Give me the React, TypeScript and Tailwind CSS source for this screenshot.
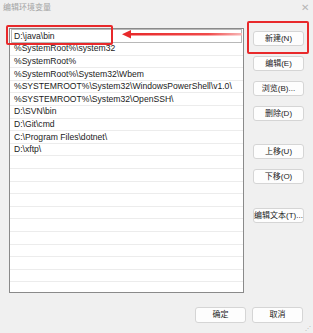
import React from 'react';

const paths = [
  'D:\\java\\bin',
  '%SystemRoot%\\system32',
  '%SystemRoot%',
  '%SystemRoot%\\System32\\Wbem',
  '%SYSTEMROOT%\\System32\\WindowsPowerShell\\v1.0\\',
  '%SYSTEMROOT%\\System32\\OpenSSH\\',
  'D:\\SVN\\bin',
  'D:\\Git\\cmd',
  'C:\\Program Files\\dotnet\\',
  'D:\\xftp\\',
];

const Btn: React.FC<{ label: string; className?: string }> = ({ label, className = '' }) => (
  <button
    className={`w-[51px] h-[15px] bg-[#fdfdfd] border border-[#d5d5d5] rounded-[3px] text-[8px] leading-none text-[#1b1b1b] flex items-center justify-center ${className}`}
  >
    {label}
  </button>
);

export default function App() {
  const empty = Array.from({ length: 10 });
  return (
    <div
      className="relative w-[313px] h-[333px] bg-[#f0f0f0] overflow-hidden"
      style={{ fontFamily: '"Liberation Sans", "Noto Sans CJK SC", sans-serif' }}
    >
      {/* Title bar */}
      <div className="h-[15px] flex items-center justify-between pl-[3px] pr-[4px]">
        <span className="text-[8px] text-[#a3a3a3]">编辑环境变量</span>
        <span className="text-[10px] text-[#b5b5b5] leading-none">✕</span>
      </div>

      <div className="flex mt-[13px] pl-[9px]">
        {/* List */}
        <div className="w-[235px] h-[265px] bg-white border border-[#8a8a8a] overflow-hidden">
          <div className="h-[14px] mx-[1px] border border-[#b8b8b8] bg-white flex items-center pl-[2px] text-[8.6px] text-[#1b1b1b]">
            {paths[0]}
          </div>
          {paths.slice(1).map((p) => (
            <div
              key={p}
              className="h-[12.6px] border-b border-[#ececec] flex items-center pl-[4px] text-[8.6px] text-[#1b1b1b] whitespace-nowrap"
            >
              {p}
            </div>
          ))}
          {empty.map((_, i) => (
            <div key={i} className="h-[12.6px] border-b border-[#ececec]" />
          ))}
        </div>

        {/* Buttons */}
        <div className="ml-[9px] pt-[3px] flex flex-col">
          <Btn label="新建(N)" />
          <Btn label="编辑(E)" className="mt-[10px]" />
          <Btn label="浏览(B)..." className="mt-[10px]" />
          <Btn label="删除(D)" className="mt-[10px]" />
          <Btn label="上移(U)" className="mt-[23px]" />
          <Btn label="下移(O)" className="mt-[10px]" />
          <Btn label="编辑文本(T)..." className="mt-[24px]" />
        </div>
      </div>

      {/* Bottom buttons */}
      <div className="flex justify-end gap-[6px] pr-[10px] mt-[14px]">
        <Btn label="确定" className="h-[16px]" />
        <Btn label="取消" className="h-[16px]" />
      </div>

      {/* Resize grip */}
      <div className="absolute right-[2px] bottom-[2px] text-[6px] text-[#b0b0b0] leading-none">⋰</div>

      {/* Annotations */}
      <div className="absolute left-[6px] top-[25px] w-[107px] h-[20px] border-2 border-[#e8292b] rounded-[2px]" />
      <div className="absolute left-[247px] top-[21px] w-[62px] h-[33px] border-2 border-[#e8292b] rounded-[2px]" />
      <svg className="absolute left-[120px] top-[29px]" width="122" height="10" viewBox="0 0 122 10">
        <defs>
          <linearGradient id="ar" x1="0" x2="1" y1="0" y2="0">
            <stop offset="0" stopColor="#e8292b" />
            <stop offset="0.7" stopColor="#f04a4a" />
            <stop offset="1" stopColor="#f8b8b8" />
          </linearGradient>
        </defs>
        <rect x="9" y="4" width="113" height="2.5" fill="url(#ar)" />
        <polygon points="2,5.2 11,1 11,9.4" fill="#e8292b" />
      </svg>
    </div>
  );
}
